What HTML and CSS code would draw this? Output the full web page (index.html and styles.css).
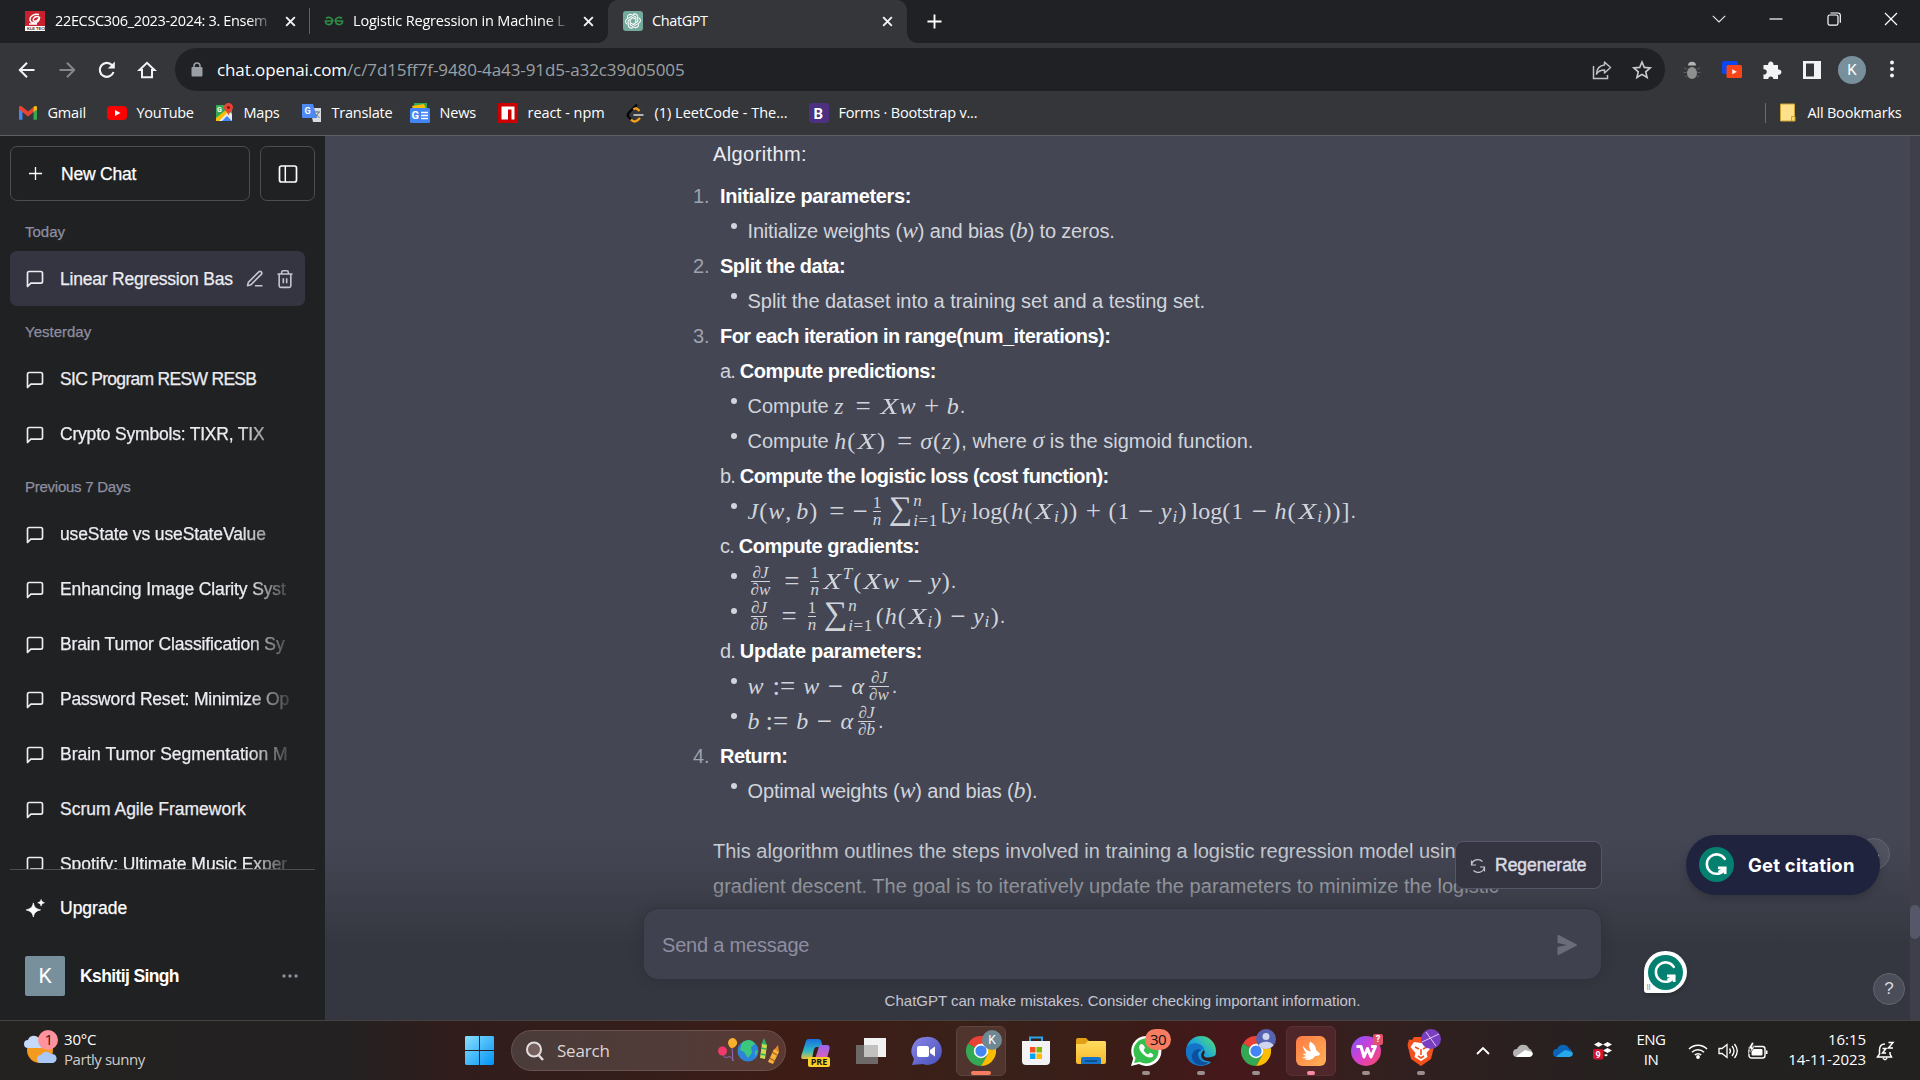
FILE: index.html
```html
<!DOCTYPE html>
<html lang="en">
<head>
<meta charset="utf-8">
<title>ChatGPT</title>
<link rel="stylesheet" href="styles.css">
</head>
<body>
<svg class="defs" width="0" height="0">
  <defs>
    <symbol id="x" viewBox="0 0 12 12"><path d="M2 2l8 8M10 2l-8 8" stroke="#f1f3f4" stroke-width="1.8"/></symbol>
    <symbol id="chat" viewBox="0 0 24 24"><path d="M21 15a2 2 0 0 1-2 2H7l-4 4V5a2 2 0 0 1 2-2h14a2 2 0 0 1 2 2z" fill="none" stroke="currentColor" stroke-width="2" stroke-linecap="round" stroke-linejoin="round"/></symbol>
    <symbol id="gram" viewBox="0 0 36 36"><circle cx="18" cy="18" r="18" fill="#03806f"/><path d="M26.5 12.2A10 10 0 1 0 26.8 22.5" fill="none" stroke="#fff" stroke-width="2.6" stroke-linecap="round"/><path d="M19.5 21.5h7.4v6.2" fill="none" stroke="#fff" stroke-width="2.8"/><path d="M20 25.5l6.5-4" stroke="#fff" stroke-width="2.2"/></symbol>
    <symbol id="chrome" viewBox="0 0 48 48"><path d="M24 24L3.2 12A24 24 0 0 1 44.8 12z" fill="#ea4335"/><path d="M24 24L3.2 12A24 24 0 0 0 24 48L34.5 30z" fill="#34a853"/><path d="M24 12h20.8A24 24 0 0 1 24 48l10.5-18z" fill="#fbbc04"/><circle cx="24" cy="24" r="11.5" fill="#fff"/><circle cx="24" cy="24" r="9" fill="#4285f4"/></symbol>
    <linearGradient id="gEdge" x1="0" y1="1" x2="1" y2="0"><stop offset="0" stop-color="#0c59a4"/><stop offset=".5" stop-color="#1ba5de"/><stop offset="1" stop-color="#5be267"/></linearGradient>
    <linearGradient id="gWin" x1="0" y1="0" x2="1" y2="1"><stop offset="0" stop-color="#8be0ff"/><stop offset="1" stop-color="#0093f5"/></linearGradient>
    <linearGradient id="gCop" x1="0" y1="0" x2="0" y2="1"><stop offset="0" stop-color="#1670e0"/><stop offset=".6" stop-color="#31b8c5"/><stop offset="1" stop-color="#e8c33a"/></linearGradient>
    <linearGradient id="gCop2" x1="0" y1="0" x2="0" y2="1"><stop offset="0" stop-color="#9566ee"/><stop offset="1" stop-color="#f25fa3"/></linearGradient>
    <linearGradient id="gChat" x1="0" y1="0" x2="1" y2="1"><stop offset="0" stop-color="#8a85e8"/><stop offset="1" stop-color="#4650b8"/></linearGradient>
    <linearGradient id="gWps" x1="0" y1="0" x2="1" y2="1"><stop offset="0" stop-color="#7b55ff"/><stop offset=".5" stop-color="#d63fd0"/><stop offset="1" stop-color="#ff4a5f"/></linearGradient>
    <linearGradient id="gFold" x1="0" y1="0" x2="0" y2="1"><stop offset="0" stop-color="#ffdc60"/><stop offset="1" stop-color="#f9b92a"/></linearGradient>
    <linearGradient id="gBurp" x1="0" y1="0" x2="1" y2="1"><stop offset="0" stop-color="#ff7a45"/><stop offset="1" stop-color="#ffb255"/></linearGradient>
  </defs>
</svg>
<div class="screen">

  <header class="tabs">
    <div class="tab t1">
      <svg class="fav" viewBox="0 0 20 20"><path fill="#c8202f" d="M0 0h20v15H0z"/><path fill="#fff" d="M0 15h20v5H0z"/><path d="M14 3.5C9 2.500 5 5 5 8.500s5 4.500 8 2c2-1.700 2-5-1-5S7 9 9 10c2 .8 4-1 6-4M4 13h8" fill="none" stroke="#fff" stroke-width="1.4"/><text x="2" y="19.300" class="kle">KLE TECH</text></svg>
      <span class="tt ls1">22ECSC306_2023-2024: 3. Ensem</span>
      <svg class="cl" viewBox="0 0 12 12"><use href="#x"/></svg>
    </div>
    <div class="tab t2">
      <svg class="fav" viewBox="0 0 20 20"><path d="M9 10H1.500c0 5 6.500 4.500 7 0M2 7.500c2-2 6-1.500 7 2.500M11 10h7.500c0 5-6.500 4.500-7 0M18 7.500c-2-2-6-1.500-7 2.500" fill="none" stroke="#2f8d46" stroke-width="1.700"/></svg>
      <span class="tt ls2">Logistic Regression in Machine L</span>
      <svg class="cl" viewBox="0 0 12 12"><use href="#x"/></svg>
    </div>
    <div class="tab t3">
      <svg class="fav" viewBox="0 0 20 20"><rect width="20" height="20" rx="3" fill="#74aa9c"/><g fill="none" stroke="#fff" stroke-width="1.050"><path d="M10 3.500c2-1.500 4.800 0 4.800 2.500v4.500L10.500 13"/><path d="M10 3.500c2-1.500 4.800 0 4.800 2.500v4.500L10.500 13" transform="rotate(60 10 10)"/><path d="M10 3.500c2-1.500 4.800 0 4.800 2.500v4.500L10.500 13" transform="rotate(120 10 10)"/><path d="M10 3.500c2-1.500 4.800 0 4.800 2.500v4.500L10.500 13" transform="rotate(180 10 10)"/><path d="M10 3.500c2-1.500 4.800 0 4.800 2.500v4.500L10.500 13" transform="rotate(240 10 10)"/><path d="M10 3.500c2-1.500 4.800 0 4.800 2.500v4.500L10.500 13" transform="rotate(300 10 10)"/></g></svg>
      <span class="tt ls3">ChatGPT</span>
      <svg class="cl" viewBox="0 0 12 12"><use href="#x"/></svg>
    </div>
    <svg class="plus" viewBox="0 0 16 16"><path d="M8 .5v15M.5 8h15" stroke="#fff" stroke-width="2"/></svg>
    <div class="winctl">
      <svg viewBox="0 0 14 14"><path d="M.8 3.800L7 10l6.200-6.200" fill="none" stroke="#e8eaed" stroke-width="1.100"/></svg>
      <svg viewBox="0 0 14 14"><path d="M.5 7h13" stroke="#fff" stroke-width="1.200"/></svg>
      <svg viewBox="0 0 14 14"><rect x="1" y="3" width="10" height="10.200" rx="1.800" fill="none" stroke="#fff" stroke-width="1.200"/><path d="M3.500 1h7.500a2.300 2.300 0 0 1 2.300 2.300v7.500" fill="none" stroke="#fff" stroke-width="1.200"/></svg>
      <svg viewBox="0 0 14 14"><path d="M1 1l12 12M13 1L1 13" stroke="#fff" stroke-width="1.200"/></svg>
    </div>
  </header>

  <nav class="toolbar">
    <div class="navs">
      <svg viewBox="0 0 20 20"><path d="M17.500 10H3M10 2.800L2.800 10l7.200 7.200" fill="none" stroke="#f1f3f4" stroke-width="2"/></svg>
      <svg viewBox="0 0 20 20"><path d="M2.500 10H17M10 2.800l7.200 7.200-7.200 7.200" fill="none" stroke="#85878b" stroke-width="2"/></svg>
      <svg viewBox="0 0 20 20"><path d="M16.500 12a7 7 0 1 1-1.600-7" fill="none" stroke="#f1f3f4" stroke-width="2.200"/><path d="M17.800 1.500v7h-7z" fill="#f1f3f4"/></svg>
      <svg viewBox="0 0 20 20"><path d="M2.500 10L10 2.800l7.500 7.200H15v7.200H5V10z" fill="none" stroke="#f1f3f4" stroke-width="2"/></svg>
    </div>
    <div class="omni">
      <svg class="lock" viewBox="0 0 12 15"><rect x=".5" y="5" width="11" height="9.500" rx="1" fill="#9aa0a6"/><path d="M3 6V4a3 3 0 0 1 6 0v2" fill="none" stroke="#9aa0a6" stroke-width="1.500"/></svg>
      <span class="url"><b>chat.openai.com</b>/c/7d15ff7f-9480-4a43-91d5-a32c39d05005</span>
      <svg class="share" viewBox="0 0 20 20"><path d="M1.500 6v12.500h14V15" fill="none" stroke="#bdc1c6" stroke-width="1.500"/><path d="M12.500 2l6 5.500-6 5.500v-3c-4 0-6.500 1.500-8 4 .3-5 3-8.500 8-9z" fill="none" stroke="#bdc1c6" stroke-width="1.500" stroke-linejoin="round"/></svg>
      <svg class="star" viewBox="0 0 20 20"><path d="M10 2l2.300 5.400 5.900.5-4.500 3.900 1.400 5.700L10 14.400l-5.100 3.100 1.400-5.700L1.800 7.900l5.900-.5z" fill="none" stroke="#c8cbd0" stroke-width="1.600"/></svg>
    </div>
    <div class="exts">
      <svg viewBox="0 0 20 20"><path d="M2 8l3 1M18 8l-3 1M1.500 12.500h3M18.500 12.500h-3M3 17l3-1.500M17 17l-3-1.500" stroke="#5c5d60"/><ellipse cx="10" cy="13" rx="5" ry="6" fill="#8f8f8f"/><path d="M6 5.500a4 3.800 0 0 1 8 0z" fill="#b4b4b4"/></svg>
      <svg viewBox="0 0 20 20"><rect y="1" width="16" height="13" rx="1.500" fill="#0b46ee"/><rect x="4.500" y="5" width="15.500" height="13" rx="1.500" fill="#fb4519"/><path d="M10.300 9.300l4.500 2.500-4.500 2.500z" fill="#fff"/></svg>
      <svg viewBox="0 0 20 20"><path d="M1.500 5h4.700a2.700 2.700 0 1 1 5.200 0H16v4.500a2.700 2.700 0 1 1 0 5.200V19h-4.700a2.500 2.500 0 1 0-5 0H1.500v-4.700a2.600 2.600 0 1 0 0-5z" fill="#f1f3f4"/></svg>
      <svg viewBox="0 0 20 20"><path fill-rule="evenodd" d="M1 1h18v18H1zM4 3.500v13h8v-13z" fill="#f1f3f4"/></svg>
      <span class="ava">K</span>
      <svg viewBox="0 0 20 20"><g fill="#f1f3f4"><circle cx="10" cy="2.500" r="2"/><circle cx="10" cy="9" r="2"/><circle cx="10" cy="15.500" r="2"/></g></svg>
    </div>
  </nav>

  <nav class="marks">
    <a><svg viewBox="0 0 20 20"><path d="M1 4.500v12.300h3.500V7z" fill="#4285f4"/><path d="M15.500 7v9.800H19V4.500z" fill="#34a853"/><path d="M1 4.500C1 3 3 2.500 4.500 4L10 8.500 15.500 4v5L10 13.500 4.500 9 1 6.500z" fill="#ea4335"/><path d="M15.500 4C17 2.500 19 3 19 4.500v2L15.500 9z" fill="#fbbc04"/></svg><span class="b1">Gmail</span></a>
    <a><svg viewBox="0 0 20 20"><rect y="3" width="20" height="14" rx="4" fill="#f00"/><path d="M8 7l5.500 3L8 13z" fill="#fff"/></svg><span class="b2">YouTube</span></a>
    <a><svg viewBox="0 0 20 20"><path d="M2 2h16v16H2z" fill="#34a853"/><path d="M3 18L14 7l4 4v7z" fill="#e8eaed"/><path d="M8 18l5-5 5 5z" fill="#4285f4"/><path d="M2 15v3h3l10-10-2-2z" fill="#fbbc04"/><path d="M14.500 0a4.500 4.500 0 0 1 4.500 4.500c0 3-3.500 4-4.500 8-1-4-4.500-5-4.500-8A4.500 4.500 0 0 1 14.500 0z" fill="#ea4335"/><circle cx="14.500" cy="4.500" r="1.500" fill="#811411"/><text x="3" y="9" class="mini">G</text></svg><span class="b3">Maps</span></a>
    <a><svg viewBox="0 0 20 20"><path d="M8 5h11v14h-8z" fill="#d9dce0"/><path d="M0 1h11l4 14H1a1 1 0 0 1-1-1z" fill="#4c8bf5"/><path d="M12 9h6M15 8v1M13 15l4-6M13.500 11l4 4" stroke="#677583" fill="none"/><text x="2.500" y="11" class="mini2">G</text></svg><span class="b4">Translate</span></a>
    <a><svg viewBox="0 0 20 20"><path d="M2 3L14 0l2 4z" fill="#ea4335"/><path d="M4 0h13v6H4z" fill="#34a853"/><path d="M2 3l12-2 2 5H3z" fill="#fbbc04"/><rect y="5" width="20" height="15" rx="1.500" fill="#4285f4"/><text x="1.500" y="16" class="gn">G</text><path d="M11 9.500h7M11 12.500h7M11 15.500h7" stroke="#fff" stroke-width="1.500"/></svg><span class="b5">News</span></a>
    <a><svg viewBox="0 0 20 20"><path fill="#cb0000" d="M0 0h20v20H0z"/><path fill="#fff" d="M3.500 3.500h13v13h-3v-10H10v10H3.500z"/></svg><span class="b6">react - npm</span></a>
    <a><svg viewBox="0 0 20 20"><path d="M12 1.500L4 9.500c-1.500 1.500-1.500 3.500 0 5l2 2" fill="none" stroke="#050505" stroke-width="2.300"/><path d="M8.500 6.500c1.500-2 3.500-1.500 6 1.500M6 16.500c3 3.500 6 2 9-1.500" fill="none" stroke="#f89f1b" stroke-width="2.300"/><path d="M8.500 12h10" stroke="#b3b3b3" stroke-width="2"/></svg><span class="b7">(1) LeetCode - The...</span></a>
    <a><svg viewBox="0 0 20 20"><rect width="20" height="20" rx="3" fill="#4d3080"/><text x="4.500" y="15.500" class="boot">B</text></svg><span class="b8">Forms · Bootstrap v...</span></a>
    <a class="all"><svg viewBox="0 0 20 20"><path d="M2.500 1h14v13l-3 4h-11z" fill="#ffe18c"/><path d="M2.500 1h14v13M13.500 18h-11V1" fill="none" stroke="#cda432"/><path d="M13.500 13.500h3.500v4.500h-3.500z" fill="#fddc68" stroke="#cda432"/></svg><span class="b9">All Bookmarks</span></a>
  </nav>

  <div class="app">
    <aside class="side">
      <div class="top">
        <div class="btn new"><svg viewBox="0 0 16 16"><path d="M8 1v14M1 8h14" stroke="#fff" stroke-width="1.400"/></svg><span class="s0">New Chat</span></div>
        <div class="btn tog"><svg viewBox="0 0 20 20"><rect x="1.500" y="2" width="17" height="16" rx="2" fill="none" stroke="#fff" stroke-width="1.700"/><path d="M7.300 2v16" stroke="#fff" stroke-width="1.500"/></svg></div>
      </div>
      <div class="hist">
        <h3 class="h1">Today</h3>
        <div class="row on"><svg><use href="#chat"/></svg><span class="s1">Linear Regression Bas</span>
          <svg class="ic" viewBox="0 0 24 24"><path d="M12 20h9M16.500 3.500a2.100 2.100 0 0 1 3 3L7 19l-4 1 1-4z" fill="none" stroke="currentColor" stroke-width="1.900" stroke-linejoin="round"/></svg>
          <svg class="ic del" viewBox="0 0 24 24"><path d="M3 6h18M19 6v14a2 2 0 0 1-2 2H7a2 2 0 0 1-2-2V6M8 6V4a2 2 0 0 1 2-2h4a2 2 0 0 1 2 2v2M10 11v6M14 11v6" fill="none" stroke="currentColor" stroke-width="1.900"/></svg></div>
        <h3 class="h2">Yesterday</h3>
        <div class="row"><svg><use href="#chat"/></svg><span class="s2">SIC Program RESW RESB</span></div>
        <div class="row"><svg><use href="#chat"/></svg><span class="s3 fade2">Crypto Symbols: TIXR, TIX</span></div>
        <h3 class="h4">Previous 7 Days</h3>
        <div class="row"><svg><use href="#chat"/></svg><span class="s4 fade2">useState vs useStateValue</span></div>
        <div class="row"><svg><use href="#chat"/></svg><span class="s5 fade">Enhancing Image Clarity Syst</span></div>
        <div class="row"><svg><use href="#chat"/></svg><span class="s6 fade">Brain Tumor Classification Sy</span></div>
        <div class="row"><svg><use href="#chat"/></svg><span class="s7 fade">Password Reset: Minimize Op</span></div>
        <div class="row"><svg><use href="#chat"/></svg><span class="s8 fade">Brain Tumor Segmentation M</span></div>
        <div class="row"><svg><use href="#chat"/></svg><span class="s9">Scrum Agile Framework</span></div>
        <div class="row"><svg><use href="#chat"/></svg><span class="s10 fade">Spotify: Ultimate Music Exper</span></div>
      </div>
      <div class="foot">
        <div class="up"><svg viewBox="0 0 18 18"><path d="M7.500 3.500c1 4 2 5 6.500 6.300-4.500 1.300-5.500 2.300-6.500 6.400C6.500 12.100 5.500 11.100 1 9.800c4.500-1.300 5.500-2.300 6.500-6.300zM14.500.5c.5 1.800 1 2.300 3 2.900-2 .6-2.500 1.100-3 3-.5-1.900-1-2.400-3-3 2-.6 2.500-1.100 3-2.900z" fill="#fff" stroke="#fff" stroke-width=".6"/></svg><span class="s11">Upgrade</span></div>
        <div class="user"><span class="sq">K</span><b class="s12">Kshitij Singh</b><svg viewBox="0 0 16 4"><g fill="#8e8ea0"><circle cx="2" cy="2" r="1.700"/><circle cx="8" cy="2" r="1.700"/><circle cx="14" cy="2" r="1.700"/></g></svg></div>
      </div>
    </aside>

    <main class="main">
      <article class="msg">
        <p class="intro">Algorithm:</p>
        <div class="ln num"><i>1.</i><b class="a1">Initialize parameters:</b></div>
        <div class="ln bul"><span class="a2">Initialize weights (<em>w</em>) and bias (<em>b</em>) to zeros.</span></div>
        <div class="ln num"><i>2.</i><b class="a3">Split the data:</b></div>
        <div class="ln bul"><span class="a4">Split the dataset into a training set and a testing set.</span></div>
        <div class="ln num"><i>3.</i><b class="a5">For each iteration in range(num_iterations):</b></div>
        <div class="ln let"><span class="a6">a. <b>Compute predictions:</b></span></div>
        <div class="ln bul"><span class="a7">Compute&nbsp;</span><span class="m e1">z<u>=</u><q>X</q>w<s>+</s>b</span><span>.</span></div>
        <div class="ln bul"><span class="a7">Compute&nbsp;</span><span class="m e2">h<r>(</r><q>X</q><r>)</r><u>=</u>σ<r>(</r>z<r>)</r></span><span class="a8">, where <em>σ</em> is the sigmoid function.</span></div>
        <div class="ln let"><span class="a9">b. <b>Compute the logistic loss (cost function):</b></span></div>
        <div class="ln bul"><span class="m e3">J<r>(</r>w<r class="com">, </r>b<r>)</r><u>=</u><r class="neg">−</r><span class="fr"><span><r>1</r></span><span>n</span></span><span class="sum">∑</span><span class="lim"><span>n</span><span>i<r>=1</r></span></span><r>[</r>y<sub>i</sub><r class="op">log</r><r>(</r>h<r>(</r><q>X</q><sub>i</sub><r>))</r><s>+</s><r>(1</r><s>−</s>y<sub>i</sub><r>)</r><r class="op">log</r><r>(1</r><s>−</s>h<r>(</r><q>X</q><sub>i</sub><r>))]</r></span><span>.</span></div>
        <div class="ln let"><span class="a10">c. <b>Compute gradients:</b></span></div>
        <div class="ln bul"><span class="m e4"><span class="fr"><span>∂J</span><span>∂w</span></span><u>=</u><span class="fr"><span><r>1</r></span><span>n</span></span><q>X</q><sup>T</sup><r>(</r><q>X</q>w<s>−</s>y<r>)</r></span><span>.</span></div>
        <div class="ln bul"><span class="m e5"><span class="fr"><span>∂J</span><span>∂b</span></span><u>=</u><span class="fr"><span><r>1</r></span><span>n</span></span><span class="sum">∑</span><span class="lim"><span>n</span><span>i<r>=1</r></span></span><r>(</r>h<r>(</r><q>X</q><sub>i</sub><r>)</r><s>−</s>y<sub>i</sub><r>)</r></span><span>.</span></div>
        <div class="ln let"><span class="a11">d. <b>Update parameters:</b></span></div>
        <div class="ln bul"><span class="m e6">w<u>:=</u>w<s>−</s><span class="al">α</span><span class="fr"><span>∂J</span><span>∂w</span></span></span><span>.</span></div>
        <div class="ln bul"><span class="m e7">b<u>:=</u>b<s>−</s><span class="al">α</span><span class="fr"><span>∂J</span><span>∂b</span></span></span><span>.</span></div>
        <div class="ln num"><i>4.</i><b class="a12">Return:</b></div>
        <div class="ln bul"><span class="a13">Optimal weights (<em>w</em>) and bias (<em>b</em>).</span></div>
        <p class="outro"><span class="a14">This algorithm outlines the steps involved in training a logistic regression model using</span><br><span class="a15">gradient descent. The goal is to iteratively update the parameters to minimize the logistic</span></p>
      </article>
      <div class="scroll"><span></span></div>
      <div class="composer">
        <div class="regen"><svg viewBox="0 0 16 16"><path d="M1.500 7a6.500 6.500 0 0 1 11-3.500M14.500 9a6.500 6.500 0 0 1-11 3.500M1.500 2.500V7H6M14.500 13.500V9H10" fill="none" stroke="#c5c5d2" stroke-width="1.200"/></svg><span class="c1">Regenerate</span></div>
        <div class="input"><span class="c2">Send a message</span><svg viewBox="0 0 20 20"><path d="M.5.700c0-.6.6-.9 1.100-.6l17.800 9.100c.6.300.6 1.200 0 1.500L1.600 19.900c-.5.300-1.100-.1-1.100-.6V12l9.500-2L.5 8z" fill="#6b6c7b"/></svg></div>
        <p class="c3">ChatGPT can make mistakes. Consider checking important information.</p>
      </div>
      <div class="down"><svg viewBox="0 0 12 12"><path d="M6 1v10M2 7l4 4 4-4" fill="none" stroke="#c5c5d2" stroke-width="1.500"/></svg></div>
      <div class="cite"><svg><use href="#gram"/></svg><b class="c4">Get citation</b></div>
      <div class="gbub"><svg><use href="#gram"/></svg><span>⠿</span></div>
      <div class="help">?</div>
    </main>
  </div>

  <footer class="task">
    <div class="weather">
      <svg viewBox="0 0 34 34"><circle cx="16" cy="20" r="13" fill="#f39a1f"/><path d="M4 18a4 4 0 0 1 0-8 6 6 0 0 1 11-1 4.500 4.500 0 0 1 2 9z" fill="#c4daf8"/><path d="M17 33a4 4 0 0 1 0-8 6 6 0 0 1 10-1 4.500 4.500 0 0 1 2 9z" fill="#a9c8f5"/><circle cx="24" cy="10" r="10" fill="#ff929c"/><text x="20.500" y="15" class="one">1</text></svg>
      <div><span class="w1">30°C</span><span class="w2">Partly sunny</span></div>
    </div>
    <svg class="start" viewBox="0 0 30 30"><path fill="url(#gWin)" d="M0 1.500Q0 0 1.500 0H14.500V14.500H0zM15.500 0H28.500Q30 0 30 1.500V14.500H15.500zM0 15.500H14.500V30H1.500Q0 30 0 28.500zM15.500 15.500H30V28.500Q30 30 28.500 30H15.500z"/></svg>
    <div class="search">
      <svg class="mag" viewBox="0 0 20 20"><circle cx="9" cy="8.500" r="7" fill="#76605d" stroke="#e4dfdf" stroke-width="2"/><path d="M13.500 14l4.500 5" stroke="#e4dfdf" stroke-width="2.400"/></svg>
      <span class="w3">Search</span>
      <svg class="pics" viewBox="0 0 64 28"><path d="M4 17q3 5 6 3t5 4M14 10l1 14" stroke="#8e6bc0" fill="none"/><circle cx="4.500" cy="14" r="4.500" fill="#f03a6c"/><path d="M15 1a5 5 0 0 1 4 6q-2 4-5 4t-4-5a5 5 0 0 1 5-5z" fill="#f9b02a"/><circle cx="30" cy="14" r="10.500" fill="#2c84d8"/><path d="M24 6c5-5 11-3 13 1l-4 3 1 6-4 5-4-6-4-2zM37 14l3-1-3 7z" fill="#3cc77f"/><path d="M43 8l3-7 3 7z" fill="#2fae66"/><path d="M42 21l2-14 5 1-2 14z" fill="#c9dc52"/><path d="M43 11l5 1M42.500 17l5 1" stroke="#2fae66" stroke-width="1.500"/><path d="M56 13l4-5 1 7z" fill="#e98a25"/><path d="M50 25l6-13 5 3-6 12z" fill="#f7b13c"/><path d="M54 15l5 3M51.500 21l5 3" stroke="#a35d15" stroke-width="1.200"/></svg>
    </div>
    <div class="apps">
      <div><svg viewBox="0 0 30 30"><path d="M8 3h9c2 0 3 1 3.500 3l1 5h-6q-2 0-3 4l-1.500 8H2C0 23 0 21 .5 19L5 5c.6-1.500 1.500-2 3-2z" fill="url(#gCop)"/><path d="M19 9h7c2 0 3 1 2.500 4L26 22c-.6 2-2 4-4 4h-9l4-12q1-5 2-5z" fill="url(#gCop2)"/></svg><em class="pre">PRE</em></div>
      <div><svg viewBox="0 0 30 30"><path d="M0 9h22v19H0z" fill="#6e6968"/><path d="M8 2h22v19H8z" fill="#f2f2f2"/><path d="M8 9h14v12H8z" fill="#c3c0c0"/></svg></div>
      <div><svg viewBox="0 0 30 30"><path d="M15 1a14 14 0 1 1-3 27l-11 1 2-6A14 14 0 0 1 15 1z" fill="url(#gChat)"/><rect x="6" y="10" width="12" height="11" rx="2" fill="#fff"/><path d="M19 14l5-3.500v10L19 17z" fill="#fff"/></svg></div>
      <div class="box"><svg><use href="#chrome"/></svg><em class="kk">K</em><hr></div>
      <div><svg viewBox="0 0 30 30"><path d="M9 7V1.500h12V7" fill="none" stroke="#29a6e8" stroke-width="2"/><path d="M1 5h28v20a4 4 0 0 1-4 4H5a4 4 0 0 1-4-4z" fill="#f3f3f5"/><path d="M9 11h5.500v5.500H9z" fill="#f25022"/><path d="M15.500 11H21v5.500h-5.500z" fill="#7fba00"/><path d="M9 17.500h5.500V23H9z" fill="#00a4ef"/><path d="M15.500 17.500H21V23h-5.500z" fill="#ffb900"/></svg></div>
      <div><svg viewBox="0 0 30 30"><path d="M0 4q0-2 2-2h8l3 3h15q2 0 2 2v8H0z" fill="#e3a016"/><path d="M0 8h9l3-3h16q2 0 2 2v19q0 2-2 2H2q-2 0-2-2z" fill="url(#gFold)"/><path d="M5 28v-5q0-2 2-2h16q2 0 2 2v5z" fill="#1673c5"/><path d="M9 25h12" stroke="#0b4f94" stroke-width="2"/></svg></div>
      <div><svg viewBox="0 0 30 30"><path d="M15 0a15 15 0 1 1-7 28L0 30l2.200-7.500A15 15 0 0 1 15 0z" fill="#fff"/><circle cx="15" cy="15" r="12.500" fill="#35c04d"/><path d="M3 27l2-6 4 5z" fill="#35c04d"/><path d="M10 8c-3 2-2 6 1.500 9.500S19 23 22 20.500c1-1.500 0-2.500-3-4l-2 2c-2-1-3.500-2.500-4.500-4.500l1.500-2c-1-3-2-4-4-4z" fill="#fff"/></svg><em class="n30">30</em><hr></div>
      <div><svg viewBox="0 0 30 30"><circle cx="15" cy="15" r="15" fill="url(#gEdge)"/><path d="M0 16C0 8 9 5 15 9c3 2 3 4 3 5-2-1-6 0-6 5s5 8 10 8c-9 6-22 1-22-11z" fill="#1474c8"/><path d="M12 18c0 6 5 9 11 8-5 5-15 4-17-4-1-4 2-8 6-9 2 0 3 1 3 2-2 0-3 1-3 3z" fill="#0c4f9e"/><path d="M18 14c2 3-1 4 0 6 2 3 9 1 12-1l2 2-5 5c-1 0-3 0-6-1-6-1-8-7-3-11z" fill="#3a1a19"/></svg><hr></div>
      <div><svg><use href="#chrome"/></svg><em class="pp"><svg viewBox="0 0 20 20"><circle cx="10" cy="10" r="10" fill="#5663b0"/><circle cx="10" cy="7.500" r="3.500" fill="#cfd4f0"/><path d="M2.500 16.500c2-5 13-5 15 0a10 10 0 0 1-15 0z" fill="#cfd4f0"/></svg></em><hr></div>
      <div class="box b2"><svg viewBox="0 0 30 30"><rect width="30" height="30" rx="6" fill="url(#gBurp)"/><path d="M14 5.500c4 2 6 5 6 8.500l4 3.500-1 2-4 .5c-2 3.500-6 4.500-10 4l2-1.500-5-.5 4-2-3.500-2 4-.5c-1.500-2-3.500-4-3.500-8 2 4 5 5.500 8 6-2-3-2.500-6-1-10z" fill="#fff"/></svg><hr></div>
      <div><svg viewBox="0 0 30 30"><circle cx="15" cy="15" r="15" fill="url(#gWps)"/><path d="M5.500 10.500H10L13 21l3.500-8.500L20 21l4.500-10.500H20" fill="none" stroke="#fff" stroke-width="3" stroke-linejoin="round"/></svg><em class="rr">?</em><hr></div>
      <div><svg viewBox="0 0 30 30"><path d="M8 1h14l2 3 3-.5 1.500 5.500L25 23l-10 7-10-7L1.500 9 3 3.500 6 4z" fill="#f4511e"/><path d="M8 6l7 1 7-1 3.500 5-5 6 1 4-6.500 4-6.500-4 1-4-5-6z" fill="#fff"/><path d="M9 11l4 2M21 11l-4 2M15 13v6M12 20l3 2 3-2" stroke="#f4511e" stroke-width="1.600" fill="none"/></svg><em class="pp bb"><svg viewBox="0 0 20 20"><circle cx="10" cy="10" r="10" fill="#7a3fc0"/><path d="M1 13L18 5M5 3l10 14" stroke="#e0c6f5"/></svg></em><hr></div>
    </div>
    <div class="tray">
      <svg class="k1" viewBox="0 0 14 14"><path d="M1 10l6-6 6 6" fill="none" stroke="#fff" stroke-width="1.900"/></svg>
      <svg class="k2" viewBox="0 0 20 14"><path d="M4 13a4 4 0 0 1 0-8 6.500 6.500 0 0 1 12-.5A4.500 4.500 0 0 1 16 13z" fill="#b4b2b2"/><path d="M3 12.500l9-6.500 7 2c2 2 0 5-3 5H5z" fill="#fff"/></svg>
      <svg class="k3" viewBox="0 0 20 14"><path d="M4 13a4 4 0 0 1 0-8 6.500 6.500 0 0 1 12-.5A4.500 4.500 0 0 1 16 13z" fill="#0a65b8"/><path d="M3 12.500l9-6.500 7 2c2 2 0 5-3 5H5z" fill="#28a8ea"/></svg>
      <svg class="k4" viewBox="0 0 20 18"><path d="M5.500 0l4.500 2.500L5.500 5 1 2.500zM14.500 0L19 2.500 14.500 5 10 2.500zM14.500 6L19 8.500 14.500 11 10 8.500zM11 13l2-1 2 1-2 1.500z" fill="#fff"/><rect y="7" width="10.500" height="10.500" rx="2" fill="#d5122c"/><text x="2.500" y="15.500" class="nine">9</text></svg>
      <div class="lang"><span>ENG</span><span>IN</span></div>
      <svg class="k5" viewBox="0 0 20 16"><path d="M1 6a12.500 12.500 0 0 1 18 0M4 9.300a8.500 8.500 0 0 1 12 0M6.800 12a4.500 4.500 0 0 1 6.400 0" fill="none" stroke="#fff" stroke-width="1.500"/><circle cx="10" cy="14" r="1.900" fill="#fff"/></svg>
      <svg class="k6" viewBox="0 0 20 16"><path d="M1 5.500h3L9 1.500v13l-5-4H1z" fill="none" stroke="#fff" stroke-width="1.300"/><path d="M11.500 5.500q2 2.500 0 5M14 3q4 5 0 10M16.500 1q5.500 7 0 14" fill="none" stroke="#fff" stroke-width="1.300"/></svg>
      <svg class="k7" viewBox="0 0 20 16"><rect x="1" y="3.500" width="16" height="11.500" rx="2.500" fill="none" stroke="#fff" stroke-width="1.400"/><rect x="3.500" y="6" width="11" height="6.500" rx="1" fill="#fff"/><path d="M18 7.500h1.500v3.500H18z" fill="#fff"/><path d="M4-1L0 6h3L1 11l6-7H4l2-4z" fill="#fff" stroke="#252221" stroke-width=".7"/></svg>
      <div class="time"><span>16:15</span><span>14-11-2023</span></div>
      <svg class="k8" viewBox="0 0 18 20"><path d="M9 3C5 3 3.500 6 3.500 9v4L1.500 16h14l-1.500-3v-2M7 17q2 3.500 4 0" fill="none" stroke="#fff" stroke-width="1.500"/><path d="M6.500 7.500h3.500L6.500 12H10M12.500 1.500H17L12.500 7H17" fill="none" stroke="#fff" stroke-width="1.500"/></svg>
    </div>
  </footer>
</div>
</body>
</html>
```
FILE: styles.css
```css
* { box-sizing: border-box; }
body { margin: 0; width: 1920px; height: 1080px; overflow: hidden; background: #202123; font-family: "Liberation Sans", Arial, sans-serif; }
svg { display: block; flex: none; overflow: visible; }
.defs { position: absolute; }
p, h3 { margin: 0; }
.screen { display: flex; flex-direction: column; height: 1080px; }

/* Browser chrome */
.tabs, .toolbar, .marks, .task { font-family: "Open Sans", "Noto Sans", sans-serif; color: #fff; white-space: nowrap; }
.tabs { height: 43px; background: #202124; display: flex; align-items: center; flex: none; }
.tab { display: flex; align-items: center; height: 43px; padding-bottom: 1px; font-size: 14.5px; }
.tab .fav { width: 20px; height: 20px; margin-right: 9px; }
.tt { flex: none; height: 22px; line-height: 22px; }
.cl { width: 13px; height: 13px; }
.t1 { width: 310px; padding-left: 25px; border-image: linear-gradient(transparent 20%, #5f6064 20% 78%, transparent 78%) 1; border-right: 1px solid; }
.t1 .tt { width: 215px; margin: 0 14px 0 1px; }
.t2 { width: 298px; padding-left: 14px; }
.t2 .tt { width: 214px; margin: 0 15px 0 0; }
.t1 .tt, .t2 .tt { -webkit-mask: linear-gradient(90deg, #000 90%, transparent 102%); mask: linear-gradient(90deg, #000 90%, transparent 102%); }
.t3 { width: 299px; padding-left: 15px; background: #35363a; border-radius: 10px 10px 0 0; position: relative; }
.t3::before, .t3::after { content: ""; position: absolute; bottom: 0; width: 10px; height: 10px; }
.t3::before { left: -10px; background: radial-gradient(circle at 0 0, transparent 9.500px, #35363a 10px); }
.t3::after { right: -10px; background: radial-gradient(circle at 100% 0, transparent 9.500px, #35363a 10px); }
.t3 .tt { width: 229px; }
.ls1 { letter-spacing: -.34px; } .ls2 { letter-spacing: -.18px; } .ls3 { letter-spacing: -.4px; }
.kle { font: bold 4px "Liberation Sans", sans-serif; fill: #333; }
.plus { width: 15px; height: 15px; margin-left: 20px; }
.winctl { margin-left: auto; display: flex; gap: 43.500px; padding: 0 22px 6px 0; }
.winctl svg { width: 14px; height: 14px; }

.toolbar { height: 53px; background: #35363a; display: flex; align-items: center; flex: none; }
.navs { width: 175px; display: flex; gap: 20px; padding-left: 17px; flex: none; }
.navs svg { width: 20px; height: 20px; }
.omni { width: 1490px; height: 43px; border-radius: 22px; background: #202124; display: flex; align-items: center; padding-left: 16px; flex: none; }
.lock { width: 12px; height: 15px; margin-right: 14px; }
.url { flex: 1; font-size: 17px; color: #9aa0a6; letter-spacing: -.1px; }
.url b { font-weight: 400; color: #fff; }
.share { width: 20px; height: 20px; margin-right: 20px; }
.star { width: 20px; height: 20px; margin-right: 13px; }
.exts { display: flex; align-items: center; padding-left: 17px; }
.exts > svg { width: 20px; height: 20px; margin-right: 20px; }
.ava { width: 28px; height: 28px; border-radius: 50%; background: #78909c; font: 15px/28px Roboto, sans-serif; text-align: center; margin: 0 16px 0 -4px; }

.marks { height: 40px; background: #35363a; border-bottom: 1px solid #5f6064; display: grid; grid-template-columns: 89px 107px 88px 108px 88px 127px 184px 1fr 155px; padding: 0 0 6px 18px; align-items: center; font-size: 14.500px; flex: none; letter-spacing: -.2px; }
.marks a { display: flex; align-items: center; gap: 9.500px; }
.marks svg { width: 20px; height: 20px; }
.marks .all { border-left: 1px solid #6a6b6e; padding-left: 12px; }
.mini { font: bold 7px Roboto, sans-serif; fill: #fff; } .mini2 { font: bold 9px Roboto, sans-serif; fill: #fff; }
.gn { font: bold 11px Roboto, sans-serif; fill: #fff; } .boot { font: bold 15px Roboto, sans-serif; fill: #fff; }
.b2 { letter-spacing: -.35px; }
.b6 { letter-spacing: -.05px; }
.b7 { letter-spacing: 0; }

/* Sidebar */
.app { height: 884px; display: flex; flex: none; }
.side { width: 325px; background: #202123; padding: 10px 10px 0; display: flex; flex-direction: column; color: #ececf1; font-size: 17.500px; white-space: nowrap; -webkit-text-stroke: .25px; flex: none; }
.top { display: flex; gap: 10px; height: 55px; flex: none; }
.btn { border: 1px solid #4d4d4f; border-radius: 7px; display: flex; align-items: center; color: #fff; }
.new { width: 240px; padding-left: 17px; gap: 18px; }
.new span { padding-top: 1px; }
.new svg { width: 15px; height: 15px; }
.tog { width: 55px; justify-content: center; }
.tog svg { width: 20px; height: 20px; }
.hist { height: 669px; overflow: hidden; border-bottom: 1px solid #4d4d4f; flex: none; }
.side h3 { font-size: 15px; font-weight: 400; color: #8e8ea0; padding: 0 15px; }
.side .h1 { height: 50px; line-height: 62px; }
.side .h2 { height: 46px; line-height: 52px; }
.side .h4 { height: 45px; line-height: 50px; letter-spacing: -.25px; }
.row { height: 55px; display: flex; align-items: center; padding-left: 15px; }
.row > svg:first-child { width: 20px; height: 20px; margin-right: 15px; }
.on { width: 295px; background: #343541; border-radius: 7px; }
.on .ic { width: 20px; height: 20px; color: #c5c5d2; }
.on > span { width: 185px; padding-top: 1px; }
.on .del { margin-left: 10px; }
.fade { width: 232px; -webkit-mask: linear-gradient(90deg, #000 81%, transparent 102%); mask: linear-gradient(90deg, #000 81%, transparent 102%); }
.fade2 { -webkit-mask: linear-gradient(90deg, #000 87%, rgba(0,0,0,.6)); mask: linear-gradient(90deg, #000 87%, rgba(0,0,0,.6)); }
.s0 { letter-spacing: -.2px; } .s1 { letter-spacing: -.2px; } .s2 { letter-spacing: -.7px; }
.s3 { letter-spacing: -.2px; } .s4 { letter-spacing: -.12px; } .s5, .s6 { letter-spacing: -.14px; }
.s7 { letter-spacing: -.2px; } .s10 { letter-spacing: -.05px; } .s12 { letter-spacing: -.62px; }
.up { height: 77px; display: flex; align-items: center; gap: 15px; padding-left: 15px; color: #fff; }
.up svg { width: 20px; height: 20px; }
.user { display: flex; align-items: center; padding: 9px 17px 0 15px; color: #fff; -webkit-text-stroke: 0; }
.sq { width: 40px; height: 40px; background: #78909c; border-radius: 2px; font: 21px/40px Roboto, sans-serif; text-align: center; margin-right: 15px; }
.user svg { width: 16px; height: 4px; margin-left: auto; }

/* Conversation */
.main { width: 1595px; height: 884px; background: #444654; position: relative; overflow: hidden; }
.msg { padding: 1px 0 0 388px; font-size: 20px; color: #d1d5db; white-space: nowrap; }
.msg b { color: #fff; }
.intro { height: 42px; line-height: 35px; color: #ececf1; letter-spacing: .4px; }
.ln { height: 35px; display: flex; align-items: center; }
.num { margin-left: -20px; }
.num i { font-style: normal; color: #9ca3af; width: 27px; }
.let { margin-left: 7px; letter-spacing: -.8px; }
.bul { padding-left: 18px; }
.bul::before { content: ""; width: 6px; height: 6px; border-radius: 50%; background: #d1d5db; margin: -11px 10.500px 0 0; flex: none; }
.a1 { letter-spacing: -.36px; } .a2 { letter-spacing: -.17px; } .a3 { letter-spacing: -.47px; } .a4 { letter-spacing: -.03px; }
.a5 { letter-spacing: -.55px; } .a6 b { letter-spacing: -.53px; } .a9 b { letter-spacing: -.61px; } .a10 b { letter-spacing: -.46px; }
.a11 b { letter-spacing: -.31px; } .a12 { letter-spacing: -.55px; } .a13 { letter-spacing: -.15px; } .a15 { letter-spacing: .04px; }
.outro { margin-top: 25px; line-height: 35px; }
.msg em, .m { font-family: "Liberation Serif", "Times New Roman", serif; font-style: italic; font-size: 24px; line-height: 24px; }
.msg em { line-height: 20px; }

/* Formulas */
.m { display: flex; align-items: center; height: 35px; letter-spacing: 1px; margin-top: -2px; }
.m r { font-style: normal; letter-spacing: 1px; white-space: pre; }
.m q { quotes: none; display: inline-block; transform: scaleX(1.22); margin: 0 3px; letter-spacing: 0; }
.m u, .m s { text-decoration: none; font-style: normal; font-size: 27px; letter-spacing: 0; }
.m u { margin: 0 8px 0 11px; }
.m s { margin: 0 7.500px; }
.m .com { letter-spacing: -.5px; }
.m .neg { font-size: 27px; letter-spacing: 0; margin-right: 2px; }
.m sub { font-size: 17px; vertical-align: 0; padding-top: 11px; line-height: 17px; margin-right: .5px; }
.m sup { font-size: 17px; padding-bottom: 14px; line-height: 17px; }
.m .op { margin: 0 0 0 4px; letter-spacing: 0; }
.e6 u { margin: 0 8px; }
.m.e7 u { margin: 0 8px 0 5px; }
.al { margin: 0 1px; }
.fr { display: flex; flex-direction: column; font-size: 17px; line-height: 16px; text-align: center; margin: 0 3px; letter-spacing: 0; padding-top: 1px; }
.fr r { letter-spacing: 0; }
.fr span:first-child { border-bottom: 1px solid #d1d5db; }
.sum { font-style: normal; font-size: 33px; line-height: 24px; margin: -5px 1px 0 4.500px; letter-spacing: 0; }
.lim { display: flex; flex-direction: column; font-size: 17px; line-height: 15px; padding-right: 3px; letter-spacing: .6px; height: 35px; justify-content: space-between; }
.m .lim r { letter-spacing: .6px; }

.scroll { position: absolute; right: 0; top: 0; width: 10px; height: 884px; background: #3e3f4b; }
.scroll span { display: block; width: 10px; height: 34px; margin-top: 769px; border-radius: 5px; background: #565869; }
.composer { position: absolute; left: 0; right: 10px; bottom: 0; height: 189px; padding: 10px 308px 0 318px; background: linear-gradient(rgba(53,55,64,0) 6%, #353740 60%); display: flex; flex-direction: column; }
.regen { align-self: flex-end; width: 147px; height: 48px; border: 1px solid #565869; border-radius: 8px; background: #343541; color: #d9d9e3; font-size: 17.500px; display: flex; align-items: center; gap: 9px; padding: 1px 0 0 14px; -webkit-text-stroke: .5px; }
.regen svg { width: 16px; height: 16px; }
.input { margin-top: 19px; height: 72px; border-radius: 15px; background: #40414f; border: 1px solid #31333d; box-shadow: 0 0 15px rgba(0,0,0,.12); display: flex; align-items: center; justify-content: space-between; padding: 1px 24px 0 18px; color: #8e8ea0; font-size: 20px; }
.c2 { padding-top: 2px; letter-spacing: -.2px; }
.input svg { width: 20px; height: 20px; }
.c3 { text-align: center; font-size: 15px; line-height: 20px; margin-top: 11px; color: #c5c5d2; }
.down, .help { position: absolute; width: 32px; height: 32px; border-radius: 50%; border: 1px solid #62646f; background: #50525f; display: flex; align-items: center; justify-content: center; }
.down { left: 1533px; top: 702px; }
.down svg { width: 14px; }
.help { left: 1548px; top: 837px; color: #d9d9e3; font-size: 17px; background: #4b4d59; }
.cite { position: absolute; left: 1361px; top: 699px; width: 194px; height: 60px; border-radius: 30px; background: #20233d; display: flex; align-items: center; gap: 14px; padding: 0 0 1px 13px; color: #fff; font: 18.500px Inter, sans-serif; letter-spacing: .2px; box-shadow: 0 3px 9px rgba(0,0,0,.2); }
.cite svg, .gbub svg { width: 35px; height: 35px; }
.gbub { position: absolute; left: 1319px; top: 815px; width: 43px; height: 42px; border-radius: 21px 21px 21px 3px; background: #fff; padding: 4px; box-shadow: 0 2px 5px rgba(0,0,0,.2); }
.gbub span { position: absolute; left: 2px; bottom: 1px; font: 7px "DejaVu Sans", sans-serif; color: #555; }

/* Taskbar */
.task { height: 60px; border-top: 1px solid #464341; background: linear-gradient(90deg, #242220 0, #232122 340px, #301d1c 450px, #351e1a 650px, #3e1c16 780px, #38211a 1000px, #3c1b17 1150px, #46181b 1230px, #33201f 1370px, #292020 1550px, #22211f 1660px); display: flex; align-items: center; flex: none; }
.weather { width: 465px; padding-left: 24px; display: flex; align-items: center; gap: 6px; flex: none; }
.weather svg { width: 34px; height: 34px; margin-top: -8px; }
.weather div, .lang, .time { display: flex; flex-direction: column; font-size: 15px; line-height: 20px; }
.weather div { margin-top: -4px; }
.lang, .time { margin-top: -3px; }
.w1 { letter-spacing: -.2px; }
.w2 { color: #cfcccb; letter-spacing: -.45px; }
.one { font: 15px "Open Sans", sans-serif; fill: #222; }
.start { width: 29px; height: 29px; }
.search { width: 275px; height: 41px; margin-left: 17px; border-radius: 21px; background: linear-gradient(90deg, #4a3c3a, #513b38 60%, #5a3932); border: 1px solid #6a5350; display: flex; align-items: center; padding-left: 13px; flex: none; }
.mag { width: 20px; height: 20px; }
.w3 { font-size: 17px; color: #dcd6d5; margin-left: 12px; width: 161px; letter-spacing: -.2px; }
.pics { width: 64px; height: 28px; }
.apps { display: flex; gap: 5px; margin-left: 5px; flex: none; }
.apps > div { width: 50px; height: 50px; border-radius: 6px; padding: 10px; position: relative; }
.apps > div > svg { width: 30px; height: 30px; }
.apps .box { background: #50352e; border: 1px solid #5f443c; padding: 9px; }
.apps .box.b2 { background: #4f272b; border-color: #5a3035; }
.apps hr { position: absolute; left: 21px; bottom: 1px; width: 8px; height: 4px; border: 0; margin: 0; border-radius: 2px; background: #9c8e8e; }
.apps .box hr { left: 14px; bottom: 0; width: 20px; background: #f67c62; }
.apps .b2 hr { left: 20px; width: 8px; background: #ff8aa0; }
.apps em { position: absolute; font: 12px/20px Roboto, sans-serif; text-align: center; }
.apps .pre { left: 17px; top: 31px; width: 22px; height: 10px; font: bold 9px/10px "Open Sans", sans-serif; background: #ffd126; color: #111; border-radius: 2px; }
.kk { left: 25px; top: 3px; width: 20px; height: 20px; border-radius: 50%; background: #6f8894; color: #fff; }
.apps .n30 { left: 24px; top: 3px; width: 26px; height: 21px; border-radius: 11px; background: #f67c62; color: #111; font: 15px/20px "Open Sans", sans-serif; letter-spacing: -.7px; }
.pp { left: 25px; top: 3px; width: 20px; height: 20px; }
.apps .rr { left: 32px; top: 8px; width: 10px; height: 11px; background: #e0526a; font: bold 9px/11px Roboto, sans-serif; border-radius: 2px; }
.tray { display: flex; align-items: center; margin-left: 30px; }
.k1 { width: 14px; height: 14px; margin-right: 23px; }
.k2, .k3 { width: 20px; height: 14px; margin-right: 20px; }
.k4 { width: 20px; height: 18px; margin-right: 21px; }
.lang { width: 34px; text-align: center; margin-right: 20px; letter-spacing: -.5px; }
.k5, .k6, .k7 { width: 20px; height: 16px; margin-right: 10px; }
.time { width: 88px; text-align: right; margin-right: 10px; letter-spacing: -.05px; }
.k8 { width: 18px; height: 20px; }
.nine { font: bold 9px Roboto, sans-serif; fill: #fff; }
```
